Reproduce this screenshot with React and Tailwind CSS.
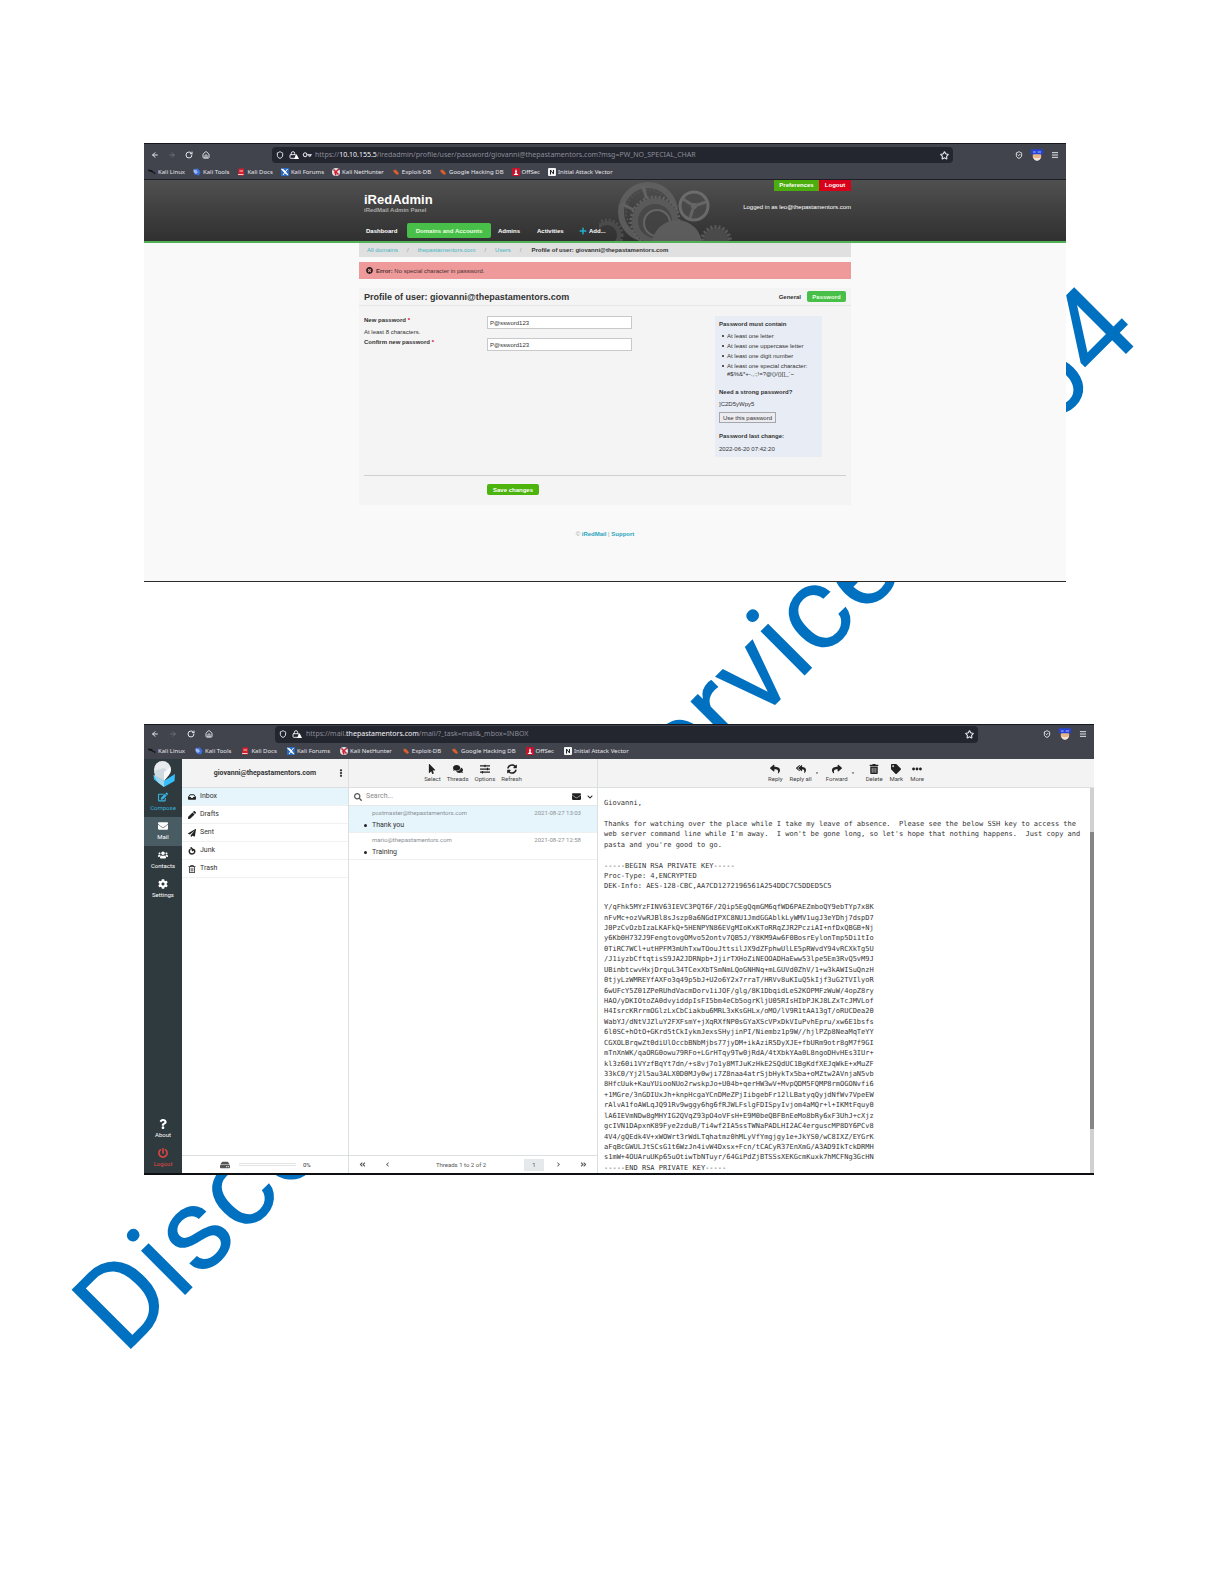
import React from "react";
import {
  FaChevronDown, FaChevronLeft, FaChevronRight, FaAngleDoubleLeft, FaAngleDoubleRight, FaCog,
  FaComments, FaEdit, FaEllipsisH, FaEllipsisV, FaEnvelope, FaHdd, FaInbox, FaMousePointer,
  FaPaperPlane, FaPen, FaPlus, FaPowerOff, FaQuestion, FaRegTrashAlt, FaReply, FaReplyAll, FaSearch,
  FaShare, FaSlidersH, FaSyncAlt, FaTag, FaTimesCircle, FaTrashAlt, FaUsers, FaCaretDown,
} from "react-icons/fa";
import { ArrowLeft, ArrowRight, House, Key, Lock, Menu, RotateCw, ShieldCheck, Shield, Star } from "lucide-react";

const BOOKMARKS = [
  ["Kali Linux", "dragon"],
  ["Kali Tools", "tools"],
  ["Kali Docs", "docs"],
  ["Kali Forums", "forums"],
  ["Kali NetHunter", "net"],
  ["Exploit-DB", "bug"],
  ["Google Hacking DB", "bug"],
  ["OffSec", "offsec"],
  ["Initial Attack Vector", "notion"],
];

function BookmarkIcon({ kind }) {
  return (
    <svg viewBox="0 0 16 16" className="h-2 w-2 shrink-0" aria-hidden="true">
      {kind === "dragon" && <path d="M0 3l8 1 3 4 4 1-1 4-3-3-5-2-6-2z" fill="#15171f" />}
      {kind === "tools" && (
        <>
          <path d="M2 2l8-1 5 7-3 7-9-2z" fill="#3f6fd8" />
          <path d="M1 3l6 1 3 5-5 3-4-4z" fill="#9db4f5" />
        </>
      )}
      {kind === "docs" && (
        <>
          <rect x="3" y="1" width="11" height="14" rx="1" fill="#d81f2c" />
          <path d="M5 5h7v2H5zM2 12h11v2H2z" fill="#f3c9cc" />
        </>
      )}
      {kind === "forums" && (
        <>
          <rect width="16" height="16" rx="1" fill="#2b6cc4" />
          <path d="M1 2l5 2 8 10-6-4zM13 2L4 14" stroke="#fff" strokeWidth="2" fill="#fff" />
        </>
      )}
      {kind === "net" && (
        <>
          <circle cx="8" cy="8" r="8" fill="#e3e3e8" />
          <path d="M3 3l10 10M14 2L6 9l2 6" stroke="#cf1f30" strokeWidth="3" fill="none" />
        </>
      )}
      {kind === "bug" && <path d="M2 5l5-2 4 4 3 4-3 3-6-4z" fill="#d65f2c" />}
      {kind === "offsec" && (
        <>
          <rect width="16" height="16" fill="#c3142d" />
          <path d="M8 2l2 5-1 3 4 4H3l4-4-1-3z" fill="#fff" />
        </>
      )}
      {kind === "notion" && (
        <>
          <rect width="16" height="16" rx="2" fill="#f2f2f2" />
          <path d="M5 13V4l6 8V4" stroke="#20222a" strokeWidth="2" fill="none" />
        </>
      )}
    </svg>
  );
}

function AvatarBadge() {
  return (
    <svg viewBox="0 0 36 36" className="h-3 w-3" aria-hidden="true">
      <circle cx="18" cy="21" r="13" fill="#e8b48a" />
      <path d="M6 24q12 8 24 0-3 11-12 11T6 24z" fill="#f3e6dc" />
      <rect y="1" width="36" height="15" rx="2" fill="#2743d6" />
      <path d="M6 9h8M20 9h10" stroke="#aab8ff" strokeWidth="3" />
    </svg>
  );
}

function BrowserChrome({ host, prefix, path, withKey, tall }) {
  return (
    <div className="border-t border-[#16181f] bg-[#42444d] font-['Noto_Sans',sans-serif] text-[#e4e4ea]">
      <div className={tall ? "flex h-[22px] items-center" : "flex h-[18px] items-center"}>
        <div className={tall ? "flex w-32 shrink-0 items-center gap-[9px] pl-[7px]" : "flex w-[131px] shrink-0 items-center gap-[10px] pl-[7px]"}>
          <button aria-label="Back"><ArrowLeft className="h-2 w-2" strokeWidth={3} /></button>
          <button aria-label="Forward" className="text-[#7b7d86]"><ArrowRight className="h-2 w-2" strokeWidth={2} /></button>
          <button aria-label="Reload"><RotateCw className="h-2 w-2" strokeWidth={3} /></button>
          <button aria-label="Home"><House className="h-2 w-2" strokeWidth={3} /></button>
        </div>
        <div className={tall ? "mr-[113px] flex h-4 grow items-center rounded-sm bg-[#23252f] px-1" : "mr-[116px] flex h-[17px] grow items-center rounded-sm bg-[#23252f] px-1"}>
          <Shield className="h-2 w-2" strokeWidth={3} />
          <span className="ml-[5px] flex items-end">
            <Lock className="h-2 w-2" strokeWidth={3} />
            <svg viewBox="0 0 10 10" className="-ml-[3px] h-[5px] w-[5px]" aria-hidden="true"><path d="M5 0l5 10H0z" fill="#fff" /></svg>
          </span>
          {withKey && <Key className="ml-1 h-2 w-2 rotate-45" strokeWidth={3} />}
          <span className="ml-1 grow text-[7px] leading-[10px] whitespace-nowrap text-[#8b8d97]">
            {prefix}<span className="text-[#f4f4f8]">{host}</span>{path}
          </span>
          <Star className="h-[9px] w-[9px]" strokeWidth={3} />
        </div>
        <div className="-ml-16 flex w-16 shrink-0 items-center justify-end gap-2 pr-[7px]">
          <ShieldCheck className="h-2 w-2" strokeWidth={3} />
          <AvatarBadge />
          <button aria-label="Menu"><Menu className="h-2 w-2" strokeWidth={3} /></button>
        </div>
      </div>
      <nav className={tall ? "flex h-[14px] items-center gap-2 border-b border-[#1d1f27] pb-px pl-1" : "flex h-4 items-center gap-[10px] pl-1"}>
        {BOOKMARKS.map(([label, kind]) => (
          <a key={label} href="#" className="flex items-center gap-[2px] text-[6px] leading-[8px] whitespace-nowrap">
            <BookmarkIcon kind={kind} />
            {label}
          </a>
        ))}
      </nav>
    </div>
  );
}

function Gears() {
  return (
    <svg viewBox="0 0 140 61" className="absolute bottom-0 left-[455px] h-[61px] w-[140px] opacity-80" aria-hidden="true" fill="none">
      <circle cx="49" cy="32" r="27" stroke="#646464" strokeWidth="6" />
      <circle cx="49" cy="32" r="22" stroke="#555" strokeWidth="2" strokeDasharray="2 2" />
      <path d="M44 6l4 14M23 24l12 6" stroke="#6a6a6a" strokeWidth="3" />
      <circle cx="56" cy="41" r="24" fill="#4b4b4b" stroke="#6b6b6b" strokeWidth="3" strokeDasharray="2 2" />
      <circle cx="56" cy="41" r="20" stroke="#606060" strokeWidth="6" />
      <circle cx="58" cy="43" r="13" fill="#454545" stroke="#6f6f6f" strokeWidth="2" />
      <circle cx="8" cy="55" r="15" stroke="#555" strokeWidth="3" strokeDasharray="2 2" />
      <circle cx="8" cy="55" r="12" stroke="#505050" strokeWidth="4" />
      <circle cx="95" cy="26" r="14" fill="#4b4b4b" stroke="#757575" strokeWidth="3" />
      <circle cx="95" cy="26" r="3" fill="#757575" />
      <path d="M95 26L84 19M95 26l12-4M95 26l-4 12" stroke="#6e6e6e" strokeWidth="3" />
      <circle cx="117" cy="61" r="14" fill="#484848" stroke="#606060" strokeWidth="4" strokeDasharray="2 2" />
      <circle cx="117" cy="61" r="12" fill="#505050" />
      <circle cx="78" cy="65" r="25" fill="#666" />
    </svg>
  );
}

const RULES = ["At least one letter", "At least one uppercase letter", "At least one digit number", "At least one special character:"];

function AdminPanel() {
  return (
    <section className="relative ml-36 mr-[159px] border-b border-[#2b2b2b] bg-[#f9f9f9] font-['Liberation_Sans',Arial,sans-serif] text-[6px] leading-[8px] text-[#333]">
      <BrowserChrome tall withKey prefix="https://" host="10.10.155.5" path="/iredadmin/profile/user/password/giovanni@thepastamentors.com?msg=PW_NO_SPECIAL_CHAR" />

      <header className="relative h-[63px] border-b-2 border-[#52b152] bg-linear-to-b from-[#505050] to-[#303030] text-white">
        <Gears />
        <div className="relative mx-auto flex h-full w-[492px] flex-col justify-between">
          <div className="flex justify-between">
            <div className="pt-[13px] pl-[5px]">
              <h1 className="text-[13px] leading-[14px] font-bold">iRedAdmin</h1>
              <p className="leading-[7px] font-bold text-[#a8a8a8]">iRedMail Admin Panel</p>
            </div>
            <div className="flex flex-col items-end">
              <div className="flex font-bold">
                <button className="h-[11px] w-[45px] bg-[#4cae0c] pb-[2px]">Preferences</button>
                <button className="h-[11px] w-8 bg-[#d9001b] pb-[2px]">Logout</button>
              </div>
              <p className="mt-3">Logged in as leo@thepastamentors.com</p>
            </div>
          </div>
          <nav className="mb-[3px] flex items-center pl-[7px] font-bold">
            <a href="#" className="w-[41px]">Dashboard</a>
            <a href="#" className="flex h-[15px] w-[84px] items-center justify-center rounded-xs bg-[#48bf48] text-[#e9ffe0]">Domains and Accounts</a>
            <a href="#" className="ml-[7px] w-[39px]">Admins</a>
            <a href="#" className="w-[42px]">Activities</a>
            <a href="#" className="flex items-center gap-[2px]"><FaPlus className="h-2 w-2 text-[#1fb0cf]" />Add...</a>
          </nav>
        </div>
      </header>

      <main className="mx-auto w-[492px]">
        <nav aria-label="Breadcrumb" className="flex h-[14px] items-center gap-2 bg-[#e0e0e0] pl-2 text-[#48b6c2]">
          <a href="#">All domains</a><span className="px-px text-[#9a9a9a]">/</span>
          <a href="#">thepastamentors.com</a><span className="px-px text-[#9a9a9a]">/</span>
          <a href="#">Users</a><span className="px-px text-[#9a9a9a]">/</span>
          <span className="pl-px font-bold text-[#333]">Profile of user: giovanni@thepastamentors.com</span>
        </nav>
        <div role="alert" className="mt-[5px] flex h-[17px] items-center gap-[3px] bg-[#ee9a9a] pl-[7px] text-[#4a3030]">
          <FaTimesCircle className="h-[7px] w-[7px] text-[#2b2020]" />
          <p><b>Error:</b> No special character in password.</p>
        </div>

        <div className="mt-[9px] bg-[#f4f4f4]">
          <div className="flex h-[18px] items-center justify-between border-b border-[#e6e6e6] pr-[5px] pl-[5px]">
            <h2 className="text-[9px] leading-[10px] font-bold">Profile of user: giovanni@thepastamentors.com</h2>
            <div className="flex items-center gap-[6px] font-bold">
              <button>General</button>
              <button className="h-[11px] w-[39px] rounded-xs bg-[#48bf48] text-[#e9ffe0]">Password</button>
            </div>
          </div>

          <form className="mx-[5px]" onSubmit={(e) => e.preventDefault()}>
            <div className="flex h-[170px] items-start border-b border-[#cfcfcf] pt-[10px]">
              <div className="grid grow grid-cols-[123px_145px]">
                <div className="h-[22px]">
                  <label htmlFor="pw" className="block leading-[9px] font-bold">New password <span className="text-[#d9001b]">*</span></label>
                  <p className="leading-[14px]">At least 8 characters.</p>
                </div>
                <input id="pw" defaultValue="P@ssword123" className="h-[13px] border border-[#c9c9c9] bg-white px-[2px] text-[6px]" />
                <label htmlFor="pw2" className="block leading-[9px] font-bold">Confirm new password <span className="text-[#d9001b]">*</span></label>
                <input id="pw2" defaultValue="P@ssword123" className="h-[13px] border border-[#c9c9c9] bg-white px-[2px] text-[6px]" />
              </div>
              <aside className="mr-6 h-[141px] w-[107px] bg-[#e8edf5] pt-1 pl-1">
                <h3 className="font-bold">Password must contain</h3>
                <ul className="mt-[3px] pl-[3px] leading-[10px]">
                  {RULES.map((rule) => (
                    <li key={rule} className="flex items-center gap-[3px]">
                      <span className="h-[2px] w-[2px] rounded-full bg-[#222]" />{rule}
                    </li>
                  ))}
                </ul>
                <p className="pl-2 leading-[6px]">#$%&amp;*+-.,:;!=?@()/{"{}"}[]_`~</p>
                <h3 className="mt-[11px] font-bold">Need a strong password?</h3>
                <p className="mt-1">]C2D5yWpy5</p>
                <button type="button" className="mt-1 block h-[11px] w-[57px] border border-[#a5a5ad] bg-[#ececf0]">Use this password</button>
                <h3 className="mt-[9px] font-bold">Password last change:</h3>
                <p className="mt-[5px]">2022-06-20 07:42:20</p>
              </aside>
            </div>
            <div className="flex h-[29px] items-start pt-2 pl-[123px]">
              <button className="h-[11px] w-[52px] rounded-xs bg-[#4cb40c] font-bold text-white">Save changes</button>
            </div>
          </form>
        </div>
        <footer className="pt-[25px] pb-[43px] text-center text-[#9a9a9a]">
          © <a href="#" className="font-bold text-[#2ba5bd]">iRedMail</a> | <a href="#" className="font-bold text-[#2ba5bd]">Support</a>
        </footer>
      </main>
    </section>
  );
}

const TASKS = [
  ["Compose", FaEdit, "text-[#38b3dd]"],
  ["Mail", FaEnvelope, "bg-[#4a5c63] text-white"],
  ["Contacts", FaUsers, "text-white"],
  ["Settings", FaCog, "text-white"],
];

function Task({ label, icon: Icon, tone }) {
  return (
    <button className={`flex h-[29px] flex-col items-center pt-1 ${tone}`}>
      <Icon className="h-[10px] w-[10px]" />
      <span className="mt-[2px] text-[6px] leading-[8px]">{label}</span>
    </button>
  );
}

function Tool({ label, icon: Icon }) {
  return (
    <button className="flex flex-col items-center">
      <Icon className="h-[10px] w-[10px] text-[#222]" />
      <span className="mt-px text-[6px] leading-[8px] text-[#444]">{label}</span>
    </button>
  );
}

function JunkIcon({ className }) {
  return (
    <svg viewBox="0 0 16 16" className={className} aria-hidden="true" fill="none" stroke="currentColor" strokeWidth="3">
      <path d="M5 4C1 7 2 14 8 14s7-7 3-9L9 7C9 4 8 2 5 1" strokeLinejoin="round" />
    </svg>
  );
}

const FOLDERS = [["Inbox", FaInbox], ["Drafts", FaPen], ["Sent", FaPaperPlane], ["Junk", JunkIcon], ["Trash", FaRegTrashAlt]];

const THREADS = [
  ["postmaster@thepastamentors.com", "2021-08-27 13:03", "Thank you"],
  ["mario@thepastamentors.com", "2021-08-27 12:58", "Training"],
];

const MESSAGE = `Giovanni,

Thanks for watching over the place while I take my leave of absence.  Please see the below SSH key to access the
web server command line while I'm away.  I won't be gone long, so let's hope that nothing happens.  Just copy and
pasta and you're good to go.

-----BEGIN RSA PRIVATE KEY-----
Proc-Type: 4,ENCRYPTED
DEK-Info: AES-128-CBC,AA7CD1272196561A254DDC7C5DDED5C5

Y/qFhk5MYzFINV63IEVC3PQT6F/2Qip5EgQqmGM6qfWD6PAEZmboQY9ebTYp7x8K
nFvMc+ozVwRJBl8sJszp0a6NGdIPXC8NU1JmdGGAblkLyWMV1ugJ3eYDhj7dspD7
J0PzCvOzbIzaLKAFkQ+5HENPYN86EVgMIoKxKToRRqZJR2PcziAI+nfDxQBGB+Nj
y6Kb0H732J9FengtovgOMvo52ontv7QB5J/Y8KM9Aw6F0BosrEylonTmp5Di1tIo
0TiRC7WCl+utHPFM3mUhTxwTOouJttsilJX9dZFphwUlLE5pRWvdY94vRCXkTg5U
/J1iyzbCftqtisS9JA2JDRNpb+JjirTXHoZiNEOOADHaEww53lpe5Em3RvQ5vM9J
UBinbtcwvHxjDrquL34TCexXbTSmNmLQoGNHNq+mLGUVd0ZhV/1+w3kAWISuQnzH
0tjyLzWMREYfAXFo3q49p5bJ+U2o6Y2x7rraT/HRVv8uKIuQ5kIjf3uG2TVIlyoR
6wUFcY5Z01ZPeRUhdVacmDorv1iJOF/glg/8K1DbqidLeS2KOPMFzWuW/4opZ8ry
HAO/yDKIOtoZA0dvyiddpIsFI5bm4eCb5ogrKljU05RIsHIbPJKJ8LZxTcJMVLof
H4IsrcKRrrmOGlzLxCbCiakbu6MRL3xKsGHLx/oMO/lV9R1tAA13gT/oRUCDea20
WabYJ/dNtVJZluY2FXFsmY+jXqRXfNP0sGYaXScVPxDkVIuPvhEpru/xw6E1bsfs
6l0SC+hOtO+GKrd5tCkIykmJexsSHyjinPI/Niembz1p9W//hjlPZp8NeaMqTeYY
CGXOLBrqwZt0diUlOccbBNbMjbs77jyDM+ikAziR5DyXJE+fbURm9otr8gM7f9GI
mTnXnWK/qaORG0owu79RFo+LGrHTqy9Tw0jRdA/4tXbkYAa0L8ngoDHvHEs3IUr+
kl3z60i1VYzfBqYt7dn/+s8vj7o1y8MTJuKzHkE2SQdUC1BgKdfXEJqWkE+xMuZF
33kC0/Yj2l5au3ALX0D0MJy0wji7Z8naa4atrSjbHykTx5ba+oMZtw2AVnjaN5vb
8HfcUuk+KauYUiooNUo2rwskpJo+U04b+qerHW3wV+MvpQDM5FQMP8rmOGONvfi6
+1MGre/3nGDIUxJh+knpHcgaYCnDMeZPjIibgebFr12lLBatyqQyjdNfWv7VpeEW
rAlvA1foAWLqJQ91Rv9wggy6hg6fRJWLFslgFDISpyIvjom4aMQr+l+IKMtFquy0
lA6IEVmNDw8gMHYIG2QVqZ93pO4oVFsH+E9M0beQBFBnEeMo8bRy6xF3UhJ+cXjz
gcIVN1DApxnK89Fye2zduB/Ti4wf2IA5ssTWNaPADLHI2AC4erguscMP8DY6PCv8
4V4/gQEdk4V+xWOWrt3rWdLTqhatmz0hMLyVfYmgjgy1e+JkYS0/wC8IXZ/EYGrK
aFqBcGWULJtSCsG1t6WzJn4ivW4Dxsx+Fcn/tCACyR37EnXmG/A3AD9IkTckDRMH
s1mW+4OUAruUKp65uOtiwTbNTuyr/64GiPdZjBTSSsXEKGcmKuxk7hMCFNg3GcHN
-----END RSA PRIVATE KEY-----`;

function MailLogo() {
  return (
    <svg viewBox="0 0 48 52" className="h-[26px] w-6" aria-hidden="true">
      <path d="M3 28l21 12 22-14-1 14-21 12L4 37z" fill="#37beff" />
      <path d="M3 28l21 12v12L12 43z" fill="#9fd8ee" />
      <circle cx="21" cy="17" r="17" fill="#e7ebee" />
      <path d="M4 20l2 10 18 10 10-17-10-9z" fill="#cfdadf" />
      <path d="M37 12q4 10-13 28V22z" fill="#f6f8f9" />
    </svg>
  );
}

function MailClient() {
  return (
    <section className="relative mt-[142px] ml-36 mr-[131px] border-b-2 border-[#0e0f12] bg-white font-[Roboto,sans-serif] text-[#333]">
      <BrowserChrome prefix="https://mail." host="thepastamentors.com" path="/mail/?_task=mail&_mbox=INBOX" />
      <div className="flex h-[414px]">
        <nav className="flex w-[38px] shrink-0 flex-col bg-[#2f3a3f]">
          <div className="flex h-[29px] items-center justify-center pl-[2px]"><MailLogo /></div>
          {TASKS.map(([label, icon, tone]) => <Task key={label} label={label} icon={icon} tone={tone} />)}
          <div className="grow" />
          <Task label="About" icon={FaQuestion} tone="text-white" />
          <Task label="Logout" icon={FaPowerOff} tone="text-[#e0453f]" />
        </nav>

        <div className="flex w-[167px] shrink-0 flex-col border-r border-[#dcdfe0]">
          <div className="flex h-[29px] items-center justify-end border-b border-[#dcdfe0] bg-[#f3f3f3] pr-[3px]">
            <b className="text-[7px]">giovanni@thepastamentors.com</b>
            <button aria-label="Account options" className="ml-[21px]"><FaEllipsisV className="h-2 w-2" /></button>
          </div>
          {FOLDERS.map(([label, Icon], i) => (
            <a key={label} href="#" className={`flex h-[18px] items-center gap-1 border-b border-[#f0f1f1] pl-[6px] text-[7px] ${i === 0 ? "bg-[#e6f5fb]" : ""}`}>
              <Icon className="h-2 w-2 shrink-0 text-[#222]" />{label}
            </a>
          ))}
          <div className="grow" />
          <div className="flex h-[18px] items-center border-t border-[#dcdfe0] pl-[38px] text-[6px]">
            <FaHdd className="h-[10px] w-[10px] text-[#555]" />
            <div className="ml-[9px] h-[3px] w-[57px] border-y border-[#e2e2e2]" />
            <span className="ml-[7px]">0%</span>
          </div>
        </div>

        <div className="flex w-[249px] shrink-0 flex-col border-r border-[#dcdfe0]">
          <div className="flex h-[29px] items-center justify-center gap-[6px] border-b border-[#dcdfe0] bg-[#f3f3f3]">
            <Tool label="Select" icon={FaMousePointer} />
            <Tool label="Threads" icon={FaComments} />
            <Tool label="Options" icon={FaSlidersH} />
            <Tool label="Refresh" icon={FaSyncAlt} />
          </div>
          <div className="flex h-[18px] items-center border-b border-[#e6e8e8] pr-1 pl-[5px]">
            <FaSearch className="h-2 w-2 text-[#555]" />
            <input aria-label="Search" placeholder="Search..." className="ml-1 min-w-0 grow text-[7px] placeholder:text-[#8a8a8a]" />
            <FaEnvelope className="h-[9px] w-[9px] text-[#222]" />
            <FaChevronDown className="ml-[6px] h-[6px] w-[6px] text-[#222]" />
          </div>
          {THREADS.map(([from, date, subject], i) => (
            <a key={from} href="#" className={`flex h-[27px] flex-col justify-center border-b border-[#eef0f0] pr-4 pl-[15px] ${i === 0 ? "bg-[#e6f5fb]" : ""}`}>
              <span className="flex justify-between pl-2 text-[6px] leading-[12px] text-[#8a9094]"><span>{from}</span><span>{date}</span></span>
              <span className="flex items-center gap-[5px] text-[7px] leading-[13px]"><span className="h-[3px] w-[3px] rounded-full bg-[#222]" />{subject}</span>
            </a>
          ))}
          <div className="grow" />
          <div className="flex h-[18px] items-center justify-between border-t border-[#dcdfe0] px-[10px] text-[6px] text-[#555]">
            <div className="flex gap-[19px]">
              <button aria-label="First page"><FaAngleDoubleLeft className="h-[7px] w-[7px]" /></button>
              <button aria-label="Previous page"><FaChevronLeft className="h-[5px] w-[5px]" /></button>
            </div>
            <span className="ml-2">Threads 1 to 2 of 2</span>
            <div className="flex items-center gap-3">
              <input aria-label="Page" defaultValue="1" className="h-3 w-5 bg-[#e6e9eb] text-center" />
              <button aria-label="Next page"><FaChevronRight className="h-[5px] w-[5px]" /></button>
              <button aria-label="Last page" className="ml-[7px]"><FaAngleDoubleRight className="h-[7px] w-[7px]" /></button>
            </div>
          </div>
        </div>

        <div className="flex min-w-0 grow flex-col">
          <div className="flex h-[29px] shrink-0 items-center justify-center gap-[7px] border-b border-[#dcdfe0] bg-[#f3f3f3]">
            <Tool label="Reply" icon={FaReply} />
            <div className="flex items-center gap-[3px]"><Tool label="Reply all" icon={FaReplyAll} /><FaCaretDown className="h-1 w-1" /></div>
            <div className="flex items-center gap-[3px]"><Tool label="Forward" icon={FaShare} /><FaCaretDown className="h-1 w-1" /></div>
            <div className="ml-1"><Tool label="Delete" icon={FaTrashAlt} /></div>
            <Tool label="Mark" icon={FaTag} />
            <Tool label="More" icon={FaEllipsisH} />
          </div>
          <div className="flex min-h-0 grow">
            <div className="flex min-w-0 grow flex-col justify-between overflow-hidden pt-[10px] pl-[6px] font-['DejaVu_Sans_Mono',monospace] text-[7px] leading-[10px] whitespace-pre text-[#333]">
              {MESSAGE.split("\n").map((line, i) => <div key={i} className="h-[10px]">{line}</div>)}
            </div>
            <div className="w-1 shrink-0 bg-[#d0d0d0] pt-11 pb-11">
              <div className="h-full w-1 bg-[#858585]" />
            </div>
          </div>
        </div>
      </div>
    </section>
  );
}

export default function App() {
  return (
    <div className="relative overflow-hidden border-b border-black bg-white pt-[143px] pb-[410px]">
      <div aria-hidden="true" className="absolute top-[1257px] left-[124px] flex origin-[0_99px] -rotate-45 font-[Roboto,sans-serif] text-[118px] leading-none whitespace-nowrap text-[#0070c0]">
        <span>Discord</span>
        <span className="ml-[321px]">Service</span>
        <span className="ml-[203px]">64</span>
      </div>
      <AdminPanel />
      <MailClient />
    </div>
  );
}
